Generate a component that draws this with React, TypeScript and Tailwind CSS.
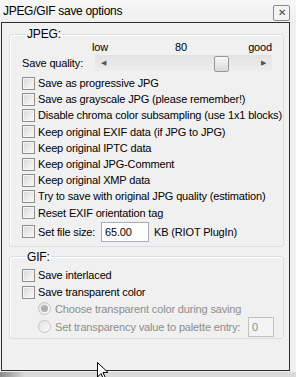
import React from "react";

const font = { fontFamily: '"Liberation Sans", Arial, sans-serif' };

function Box() {
  return (
    <span className="w-[13px] h-[13px] border border-[#8f8f8f] bg-gradient-to-br from-[#d8d8d8] to-[#fafafa] shadow-[inset_0_0_0_1px_#f4f4f4] shrink-0" />
  );
}

function Check({ label, h }: { label: string; h: string }) {
  return (
    <div className={`flex items-center ${h}`}>
      <Box />
      <span className="ml-[3px] whitespace-nowrap text-black">{label}</span>
    </div>
  );
}

function Radio({ label, checked }: { label: string; checked?: boolean }) {
  return (
    <div className="flex items-center">
      <span className="w-[13px] h-[13px] rounded-full border border-[#c4c4c4] bg-gradient-to-br from-[#e3e3e3] to-[#fbfbfb] flex items-center justify-center shrink-0">
        {checked && <span className="w-[7px] h-[7px] rounded-full bg-[#b0b0b0]" />}
      </span>
      <span className="ml-[4px] whitespace-nowrap text-[#8d8d8d]">{label}</span>
    </div>
  );
}

export default function App() {
  const jpegChecks = [
    "Save as progressive JPG",
    "Save as grayscale JPG (please remember!)",
    "Disable chroma color subsampling (use 1x1 blocks)",
    "Keep original EXIF data (if JPG to JPG)",
    "Keep original IPTC data",
    "Keep original JPG-Comment",
    "Keep original XMP data",
    "Try to save with original JPG quality (estimation)",
    "Reset EXIF orientation tag",
  ];

  return (
    <div className="relative w-[296px] h-[377px] bg-[#f0f0f0] overflow-hidden text-[11px] leading-[14px] tracking-[-0.15px]" style={font}>
      {/* title bar */}
      <div className="h-[22px] flex items-center justify-between pl-[3px] pr-[6px] bg-gradient-to-b from-[#f7f7f7] to-[#efefef]">
        <span className="text-[12px] tracking-[-0.3px] text-black">JPEG/GIF save options</span>
        <span className="w-[17px] h-[16px] mt-[3px] border border-[#8a8a8a] rounded-[2px] bg-[#f4f4f4] flex items-center justify-center text-[10px] text-[#444]">
          ✕
        </span>
      </div>

      {/* window body */}
      <div className="ml-[1px] w-[289px] h-[349px] border border-[#2e2e2e] pl-[7px] pr-[5px] pt-[4px]">
        <fieldset className="min-w-0 border border-[#d5dfe5] rounded-[3px] pl-[12px] pr-[4px] pb-[4px] shadow-[inset_1px_1px_0_#fff]">
          <legend className="ml-[4px] px-[1px] text-[12px] text-black">JPEG:</legend>
          <div className="flex h-[11px] items-center text-black ml-[70px] mr-[7px]">
            <span className="w-[83px]">low</span>
            <span>80</span>
            <span className="ml-auto">good</span>
          </div>
          <div className="flex items-center h-[22px]">
            <span className="w-[73px] whitespace-nowrap">Save quality:</span>
            <div className="relative w-[177px] h-[16px] bg-gradient-to-b from-[#e3e3e3] to-[#ededed] flex items-center justify-between px-[6px] text-[7px] text-[#555]">
              <span>◀</span>
              <span>▶</span>
              <span className="absolute left-[119px] top-[1px] w-[15px] h-[16px] border border-[#979797] rounded-[2px] bg-gradient-to-b from-[#f8f8f8] to-[#d9d9d9]" />
            </div>
          </div>
          <div className="mt-[1px]">
            {jpegChecks.map((c) => (
              <Check key={c} label={c} h="h-[16.2px]" />
            ))}
          </div>
          <div className="flex items-center h-[20px] mt-[1px]">
            <Box />
            <span className="ml-[3px] w-[63px] whitespace-nowrap">Set file size:</span>
            <span className="w-[48px] h-[20px] border border-[#abadb3] bg-white pl-[3px] flex items-center">65.00</span>
            <span className="ml-[5px] whitespace-nowrap">KB (RIOT PlugIn)</span>
          </div>
        </fieldset>

        <fieldset className="min-w-0 mt-[3px] border border-[#d5dfe5] rounded-[3px] pl-[12px] pr-[9px] pb-[1px] shadow-[inset_1px_1px_0_#fff]">
          <legend className="ml-[4px] px-[1px] text-[12px] text-black">GIF:</legend>
          <div className="mt-[3px]">
            <Check label="Save interlaced" h="h-[17px]" />
            <Check label="Save transparent color" h="h-[17px]" />
          </div>
          <div className="pl-[16px]">
            <div className="h-[16px] flex items-center">
              <Radio label="Choose transparent color during saving" checked />
            </div>
            <div className="h-[20px] flex items-center justify-between">
              <Radio label="Set transparency value to palette entry:" />
              <span className="w-[26px] h-[20px] border border-[#c2c2c2] bg-[#f4f4f4] text-[#8d8d8d] pl-[3px] flex items-center">0</span>
            </div>
          </div>
        </fieldset>
      </div>

      {/* bottom strip */}
      <div className="h-[6px] mt-[1px] flex">
        <div className="w-[24px] bg-gradient-to-r from-[#8c8c8c] to-[#d6d6d6]" />
        <div className="flex-1 bg-[#d9d9d9]" />
      </div>

      {/* mouse cursor */}
      <svg className="absolute left-[97px] top-[362px]" width="13" height="18" viewBox="0 0 13 18">
        <path d="M0.5 0.5 L0.5 15 L4 11.5 L6.5 17 L8.5 16 L6 10.5 L11 10.5 Z" fill="#fff" stroke="#000" strokeWidth="1" />
      </svg>
    </div>
  );
}
